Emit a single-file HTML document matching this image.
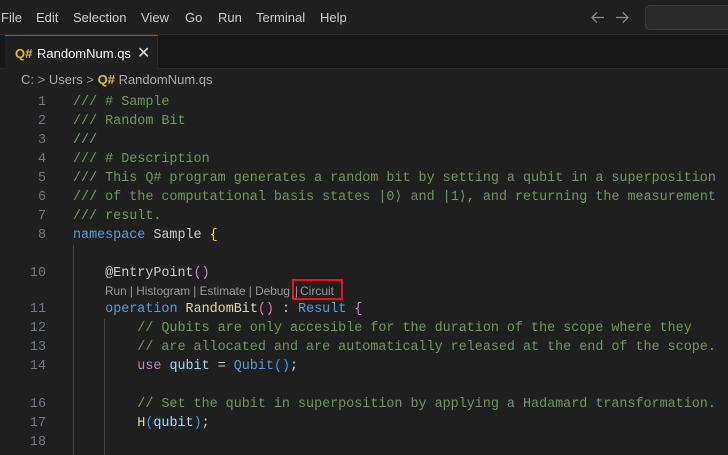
<!DOCTYPE html>
<html><head><style>
body{margin:0;width:728px;height:454px;overflow:hidden;background:#1f1f1f;font-family:"Liberation Sans",sans-serif;position:relative}
.title{position:absolute;left:0;top:0;width:728px;height:34px;background:#1f1f1f;border-bottom:1px solid #2b2b2b;color:#cccccc;font-size:13px}
.title span{position:absolute;top:10px}
.tabs{position:absolute;top:35px;left:0;width:728px;height:33px;background:#181818;border-bottom:1px solid #2b2b2b}
.tab{position:absolute;left:5px;top:0;width:153px;height:34px;background:#1f1f1f;border-top:1px solid #0078d4;border-right:1px solid #2b2b2b;box-sizing:border-box}
.q{font-weight:bold;color:#e2b93d}
.crumb{position:absolute;top:72px;left:21px;font-size:13px;color:#a9a9a9}
.code{position:absolute;top:93px;left:0;font-family:"Liberation Mono","DejaVu Sans Mono",monospace;font-size:13.4px}
.l{height:19px;line-height:19px;white-space:pre;position:relative}
.n{position:absolute;left:0;width:46px;text-align:right;color:#6e7681}
.t{position:absolute;left:73px;color:#cccccc}
.c{color:#6a9955}.k{color:#569cd6}.p{color:#c586c0}.f{color:#dcdcaa}.y{color:#ffd700}.m{color:#da70d6}.b{color:#179fff}.v{color:#9cdcfe}
.lens{height:17px;position:relative;font-family:"Liberation Sans",sans-serif;font-size:12px;color:#999999;white-space:nowrap}
.g{position:absolute;width:1px;background:#404040}
</style></head><body>
<div class="title">
<span style="left:1px">File</span><span style="left:36px">Edit</span><span style="left:73px">Selection</span><span style="left:141px">View</span><span style="left:185px">Go</span><span style="left:218px">Run</span><span style="left:256px">Terminal</span><span style="left:320px">Help</span>
<svg style="position:absolute;left:590px;top:10px" width="40" height="15" viewBox="0 0 40 15"><path d="M2 7.5H14M7 2.5L2 7.5L7 12.5" stroke="#8a8a8a" stroke-width="1.3" fill="none"/><path d="M28 7.5H40M35 2.5L40 7.5L35 12.5" transform="translate(-2 0)" stroke="#8a8a8a" stroke-width="1.3" fill="none"/></svg>
<div style="position:absolute;left:645px;top:5px;width:100px;height:23px;border:1px solid #3c3c3c;border-radius:5px;background:#2a2a2a"></div>
</div>
<div class="tabs"><div class="tab">
<span class="q" style="position:absolute;left:10px;top:10px;font-size:13px">Q#</span>
<span style="position:absolute;left:32px;top:10px;font-size:13px;color:#ffffff">RandomNum.qs</span>
<span style="position:absolute;left:132px;top:7px;font-size:16px;color:#ddd">✕</span>
</div></div>
<div class="crumb">C: <span style="color:#999">&gt;</span> Users <span style="color:#999">&gt;</span> <span class="q">Q#</span> RandomNum.qs</div>
<div class="g" style="left:73px;top:245px;height:210px"></div>
<div class="g" style="left:104px;top:319px;height:136px"></div>
<div class="code">
<div class="l"><span class="n">1</span><span class="t c">/// # Sample</span></div>
<div class="l"><span class="n">2</span><span class="t c">/// Random Bit</span></div>
<div class="l"><span class="n">3</span><span class="t c">///</span></div>
<div class="l"><span class="n">4</span><span class="t c">/// # Description</span></div>
<div class="l"><span class="n">5</span><span class="t c">/// This Q# program generates a random bit by setting a qubit in a superposition</span></div>
<div class="l"><span class="n">6</span><span class="t c">/// of the computational basis states |0⟩ and |1⟩, and returning the measurement</span></div>
<div class="l"><span class="n">7</span><span class="t c">/// result.</span></div>
<div class="l"><span class="n">8</span><span class="t"><span class="k">namespace</span> Sample <span class="y">{</span></span></div>
<div class="l"></div>
<div class="l"><span class="n">10</span><span class="t">    @EntryPoint<span class="m">()</span></span></div>
<div class="lens"><span style="position:absolute;left:105px;top:1px;font-size:11.8px">Run | Histogram | Estimate | Debug</span><span style="position:absolute;left:295px;top:1px">|</span><span style="position:absolute;left:300px;top:1px">Circuit</span><div style="position:absolute;left:292px;top:-4px;width:51px;height:21px;border:2px solid #e81123;box-sizing:border-box"></div></div>
<div class="l"><span class="n">11</span><span class="t">    <span class="k">operation</span> <span class="f">RandomBit</span><span class="m">()</span> : <span class="k">Result</span> <span class="m">{</span></span></div>
<div class="l"><span class="n">12</span><span class="t c">        // Qubits are only accesible for the duration of the scope where they</span></div>
<div class="l"><span class="n">13</span><span class="t c">        // are allocated and are automatically released at the end of the scope.</span></div>
<div class="l"><span class="n">14</span><span class="t">        <span class="p">use</span> <span class="v">qubit</span> = <span class="k">Qubit</span><span class="b">()</span>;</span></div>
<div class="l"></div>
<div class="l"><span class="n">16</span><span class="t c">        // Set the qubit in superposition by applying a Hadamard transformation.</span></div>
<div class="l"><span class="n">17</span><span class="t">        <span class="f">H</span><span class="b">(</span><span class="v">qubit</span><span class="b">)</span>;</span></div>
<div class="l"><span class="n">18</span></div>
</div>
</body></html>
